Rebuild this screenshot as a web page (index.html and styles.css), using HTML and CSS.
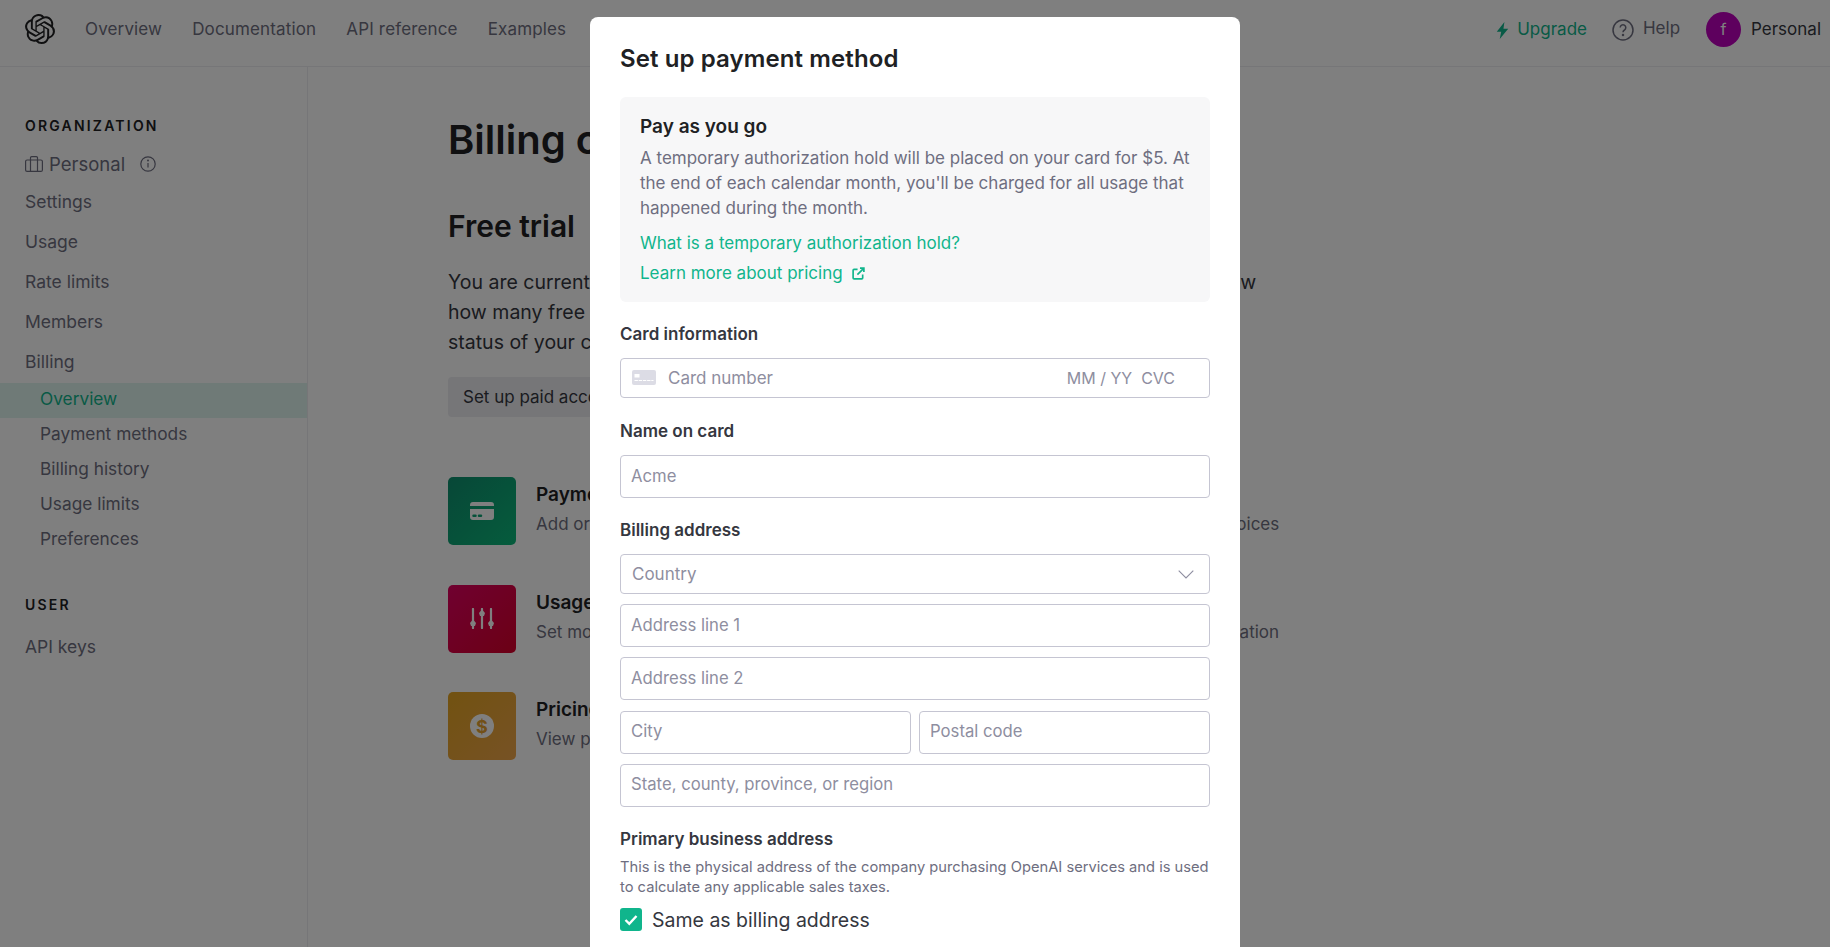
FILE: index.html
```html
<!DOCTYPE html>
<html>
<head>
  <meta charset="utf-8">
  <title>Billing overview</title>
  <link rel="stylesheet" href="styles.css">
</head>
<body>
<header class="topbar">
  <svg class="logo" viewBox="0 0 24 24" fill="#202123"><path d="M22.2819 9.8211a5.9847 5.9847 0 0 0-.5157-4.9108 6.0462 6.0462 0 0 0-6.5098-2.9A6.0651 6.0651 0 0 0 4.9807 4.1818a5.9847 5.9847 0 0 0-3.9977 2.9 6.0462 6.0462 0 0 0 .7427 7.0966 5.98 5.98 0 0 0 .511 4.9107 6.051 6.051 0 0 0 6.5146 2.9001A5.9847 5.9847 0 0 0 13.2599 24a6.0557 6.0557 0 0 0 5.7718-4.2058 5.9894 5.9894 0 0 0 3.9977-2.9001 6.0557 6.0557 0 0 0-.7475-7.0729zm-9.022 12.6081a4.4755 4.4755 0 0 1-2.8764-1.0408l.1419-.0804 4.7783-2.7582a.7948.7948 0 0 0 .3927-.6813v-6.7369l2.02 1.1686a.071.071 0 0 1 .038.052v5.5826a4.504 4.504 0 0 1-4.4945 4.4944zm-9.6607-4.1254a4.4708 4.4708 0 0 1-.5346-3.0137l.142.0852 4.783 2.7582a.7712.7712 0 0 0 .7806 0l5.8428-3.3685v2.3324a.0804.0804 0 0 1-.0332.0615L9.74 19.9502a4.4992 4.4992 0 0 1-6.1408-1.6464zM2.3408 7.8956a4.485 4.485 0 0 1 2.3655-1.9728V11.6a.7664.7664 0 0 0 .3879.6765l5.8144 3.3543-2.0201 1.1685a.0757.0757 0 0 1-.071 0l-4.8303-2.7865A4.504 4.504 0 0 1 2.3408 7.872zm16.5963 3.8558L13.1038 8.364 15.1192 7.2a.0757.0757 0 0 1 .071 0l4.8303 2.7913a4.4944 4.4944 0 0 1-.6765 8.1042v-5.6772a.79.79 0 0 0-.407-.667zm2.0107-3.0231l-.142-.0852-4.7735-2.7818a.7759.7759 0 0 0-.7854 0L9.409 9.2297V6.8974a.0662.0662 0 0 1 .0284-.0615l4.8303-2.7866a4.4992 4.4992 0 0 1 6.6802 4.66zM8.3065 12.863l-2.02-1.1638a.0804.0804 0 0 1-.038-.0567V6.0742a4.4992 4.4992 0 0 1 7.3757-3.4537l-.142.0805L8.704 5.459a.7948.7948 0 0 0-.3927.6813zm1.0976-2.3654l2.602-1.4998 2.6069 1.4998v2.9994l-2.5974 1.4997-2.6067-1.4997Z"/></svg>
  <nav class="topnav">
    <a>Overview</a>
    <a>Documentation</a>
    <a>API reference</a>
    <a>Examples</a>
  </nav>
  <div class="topright">
    <a class="upgrade">
      <svg class="bolt" viewBox="0 0 12 16" fill="currentColor"><path d="M7.8 0 .6 9.2h4.2L3.4 16l8-9.6H6.9z"/></svg>
      Upgrade
    </a>
    <a class="help">
      <svg class="help-icon" viewBox="0 0 22 22" fill="none" stroke="currentColor" stroke-width="1.5"><circle cx="11" cy="11" r="10"/><path d="M8.2 8.6a2.8 2.8 0 1 1 4.3 2.4c-1 .6-1.5 1.1-1.5 2.2"/><circle cx="11" cy="16" r=".5" fill="currentColor"/></svg>
      <span class="help-text">Help</span>
    </a>
    <span class="avatar">f</span>
    <span class="account">Personal</span>
  </div>
</header>

<div class="layout">
  <aside class="sidebar">
    <div class="side-title">ORGANIZATION</div>
    <div class="org">
      <svg class="org-icon" viewBox="0 0 18 16" fill="none" stroke="currentColor" stroke-width="1.2"><rect x=".6" y="4" width="16.8" height="11.4" rx="1.5"/><path d="M5.5 4V1.8A1.2 1.2 0 0 1 6.7.6h4.6a1.2 1.2 0 0 1 1.2 1.2V4M5.5 4v11.4M12.5 4v11.4"/></svg>
      <span>Personal</span>
      <svg class="info-icon" viewBox="0 0 16 16" fill="none" stroke="currentColor" stroke-width="1.2"><circle cx="8" cy="8" r="7.2"/><path d="M8 7v4.5"/><circle cx="8" cy="4.6" r=".4" fill="currentColor"/></svg>
    </div>
    <a class="side-link">Settings</a>
    <a class="side-link">Usage</a>
    <a class="side-link">Rate limits</a>
    <a class="side-link">Members</a>
    <a class="side-link billing">Billing</a>
    <a class="side-sub active">Overview</a>
    <a class="side-sub">Payment methods</a>
    <a class="side-sub">Billing history</a>
    <a class="side-sub">Usage limits</a>
    <a class="side-sub">Preferences</a>
    <div class="side-title user">USER</div>
    <a class="side-link">API keys</a>
  </aside>

  <main class="content">
    <h1>Billing overview</h1>
    <h2>Free trial</h2>
    <p class="lead">You are currently on a free trial, with the free credit you got on signing up. You can view<br>
      how many free tokens you have used on the usage page, and you can check the<br>
      status of your credit at any time.</p>
    <button class="plain-btn">Set up paid account</button>
    <div class="cards">
      <div class="card">
        <div class="tile green">
          <svg class="tile-icon" viewBox="0 0 24 18" fill="#fff"><path d="M0 3a3 3 0 0 1 3-3h18a3 3 0 0 1 3 3v1H0zM0 7h24v8a3 3 0 0 1-3 3H3a3 3 0 0 1-3-3zm3.5 5.5a1.2 1.2 0 0 0 0 2.5h2a1.2 1.2 0 0 0 0-2.5zm5.5 0a1.2 1.2 0 0 0 0 2.5h2a1.2 1.2 0 0 0 0-2.5z"/></svg>
        </div>
        <div><h3>Payment methods</h3><p>Add or change payment method</p></div>
      </div>
      <div class="card">
        <div class="tile blank"></div>
        <div><h3>Billing history</h3><p>View past and current invoices</p></div>
      </div>
      <div class="card">
        <div class="tile red">
          <svg class="tile-icon sliders" viewBox="0 0 24 21" fill="#fff"><path d="M3 1v19M12 1v19M21 1v19" stroke="#fff" stroke-width="2.2" stroke-linecap="round"/><path d="M3 11.5 6 15l-1 3H1l-1-3zM12 1.5 15 5l-1 3h-4L9 5zM21 11.5 24 15l-1 3h-4l-1-3z"/></svg>
        </div>
        <div><h3>Usage limits</h3><p>Set monthly spend limits</p></div>
      </div>
      <div class="card">
        <div class="tile blank"></div>
        <div><h3>Preferences</h3><p>Update your billing information</p></div>
      </div>
      <div class="card">
        <div class="tile orange"><span class="dollar">$</span></div>
        <div><h3>Pricing</h3><p>View pricing and FAQs</p></div>
      </div>
    </div>
  </main>
</div>

<div class="overlay">
  <section class="modal">
    <h2 class="modal-title">Set up payment method</h2>
    <div class="notice">
      <h4>Pay as you go</h4>
      <p>A temporary authorization hold will be placed on your card for $5. At the end of each calendar month, you'll be charged for all usage that happened during the month.</p>
      <a class="notice-link first">What is a temporary authorization hold?</a>
      <a class="notice-link">Learn more about pricing
        <svg class="ext-icon" viewBox="0 0 14 14" fill="none" stroke="currentColor" stroke-width="1.8"><path d="M6 2.5H2.2a1 1 0 0 0-1 1v8.3a1 1 0 0 0 1 1h8.3a1 1 0 0 0 1-1V8M5.8 8.2 12.6 1.4M8.6 1.2h4.2v4.2"/></svg>
      </a>
    </div>

    <label class="field-label card-label">Card information</label>
    <div class="field card-field">
      <svg class="card-icon" viewBox="0 0 24 15"><rect width="24" height="15" rx="2" fill="#dcdce5"/><rect x="2.5" y="4" width="5" height="3.5" fill="#fff"/><path d="M2.5 10.5h19" stroke="#fff" stroke-width="1.2" stroke-dasharray="3.4 .8"/></svg>
      <span class="ph number">Card number</span>
      <span class="ph expiry">MM / YY</span>
      <span class="ph cvc">CVC</span>
    </div>

    <label class="field-label name-label">Name on card</label>
    <div class="field tall"><span class="ph">Acme</span></div>

    <label class="field-label">Billing address</label>
    <div class="field country">
      <span class="ph">Country</span>
      <svg class="chevron" viewBox="0 0 16 9" fill="none" stroke="#8e8ea0" stroke-width="1.1"><path d="M.7.7 8 8l7.3-7.3"/></svg>
    </div>
    <div class="stack">
      <div class="field tall"><span class="ph">Address line 1</span></div>
      <div class="field tall"><span class="ph">Address line 2</span></div>
      <div class="two">
        <div class="field tall"><span class="ph">City</span></div>
        <div class="field tall"><span class="ph">Postal code</span></div>
      </div>
      <div class="field tall"><span class="ph">State, county, province, or region</span></div>
    </div>

    <label class="field-label">Primary business address</label>
    <p class="hint">This is the physical address of the company purchasing OpenAI services and is used to calculate any applicable sales taxes.</p>
    <div class="same">
      <span class="checkbox">
        <svg viewBox="0 0 14 12" fill="none" stroke="#fff" stroke-width="2.4"><path d="M1.5 6 5.3 9.8 12.5 2"/></svg>
      </span>
      Same as billing address
    </div>
  </section>
</div>
</body>
</html>
```

FILE: styles.css
```css
* {
  box-sizing: border-box;
}
html, body {
  height: 100%;
  margin: 0;
  overflow: hidden;
}
body {
  font-family: Inter, "Liberation Sans", sans-serif;
  color: #202123;
  background: #fff;
}
h1, h2, h3, h4, p {
  margin: 0;
}

/* top bar */
.topbar {
  display: flex;
  align-items: center;
  height: 67px;
  padding: 0 9px 8px 25px;
  border-bottom: 1px solid #ececf1;
}
.logo {
  width: 30px;
  height: 30px;
}
.topnav {
  display: flex;
  gap: 30px;
  margin-left: 30px;
  font-size: 17px;
  letter-spacing: .15px;
  color: #6e6e80;
}
.topright {
  display: flex;
  align-items: center;
  margin-left: auto;
  font-size: 17px;
}
.upgrade {
  display: flex;
  align-items: center;
  gap: 8px;
  color: #10b58c;
}
.bolt {
  width: 13px;
  height: 17px;
  margin-top: 2px;
}
.help {
  display: flex;
  align-items: center;
  gap: 9px;
  margin-left: 25px;
  color: #6e6e80;
}
.help-icon {
  width: 22px;
  height: 22px;
  margin-top: 2px;
}
.help-text {
  margin-bottom: 2px;
}
.avatar {
  display: flex;
  align-items: center;
  justify-content: center;
  width: 35px;
  height: 35px;
  margin-left: 26px;
  border-radius: 50%;
  background: #bc00bc;
  color: #fff;
  font-size: 16px;
}
.account {
  margin-left: 10px;
  color: #353740;
}

/* sidebar */
.layout {
  display: flex;
  height: 880px;
}
.sidebar {
  flex: none;
  width: 308px;
  padding-top: 49px;
  border-right: 1px solid #ececf1;
  color: #6e6e80;
}
.side-title {
  padding-left: 25px;
  font-size: 14px;
  line-height: 20px;
  font-weight: 600;
  letter-spacing: 2.2px;
  color: #202123;
}
.side-title.user {
  margin-top: 37px;
  margin-bottom: 12px;
}
.org {
  display: flex;
  align-items: center;
  height: 24px;
  margin: 16px 0 6px;
  padding-left: 25px;
  font-size: 18.5px;
}
.org-icon {
  width: 18px;
  height: 16px;
  margin-right: 6px;
}
.info-icon {
  width: 16px;
  height: 16px;
  margin-left: 15px;
}
.side-link {
  display: block;
  height: 40px;
  padding-left: 25px;
  font-size: 17.5px;
  line-height: 40px;
}
.side-link.billing {
  height: 41px;
}
.side-sub {
  display: block;
  height: 35px;
  padding-left: 40px;
  font-size: 17.3px;
  line-height: 31px;
}
.side-sub.active {
  background: #dff5ee;
  color: #10b58c;
}

/* main column */
.content {
  flex: 1;
  padding: 49px 0 0 140px;
}
h1 {
  font-size: 40px;
  line-height: 48px;
  font-weight: 600;
}
.content h2 {
  margin-top: 44px;
  font-size: 30px;
  line-height: 36px;
  font-weight: 600;
}
.lead {
  margin-top: 23px;
  font-size: 19.5px;
  line-height: 30px;
  color: #353740;
  white-space: nowrap;
}
.plain-btn {
  display: block;
  height: 40px;
  margin-top: 20px;
  padding: 0 15px;
  border: 0;
  border-radius: 4px;
  background: #ececf1;
  color: #353740;
  font: inherit;
  font-size: 17px;
}
.cards {
  display: grid;
  grid-template-columns: 496px 1fr;
  row-gap: 39.5px;
  margin-top: 60px;
}
.card {
  display: flex;
  gap: 20px;
}
.card h3 {
  margin-top: 7px;
  font-size: 19px;
  line-height: 22px;
  font-weight: 600;
}
.card p {
  margin-top: 7px;
  font-size: 17px;
  line-height: 22px;
  color: #6e6e80;
  white-space: nowrap;
}
.tile {
  display: flex;
  align-items: center;
  justify-content: center;
  flex: none;
  width: 68px;
  height: 68px;
  border-radius: 5px;
}
.tile.green {
  background: linear-gradient(135deg, #0f8f6f, #0bb87a);
}
.tile.red {
  background: linear-gradient(135deg, #e00060, #d8002a);
}
.tile.orange {
  background: linear-gradient(135deg, #e4a422, #eea54a);
}
.tile.blank {
  visibility: hidden;
}
.tile-icon {
  width: 24px;
  height: 18px;
}
.tile-icon.sliders {
  height: 21px;
}
.dollar {
  display: flex;
  align-items: center;
  justify-content: center;
  width: 24px;
  height: 24px;
  border-radius: 50%;
  background: #fff;
  color: #e4a030;
  font-size: 18px;
  font-weight: 700;
}

/* modal */
.overlay {
  position: fixed;
  inset: 0;
  display: flex;
  justify-content: center;
  padding-top: 17px;
  background: rgba(0, 0, 0, .5);
}
.modal {
  flex: none;
  width: 650px;
  height: 1100px;
  padding: 26px 30px;
  border-radius: 8px;
  background: #fff;
}
.modal-title {
  font-size: 24px;
  line-height: 32px;
  font-weight: 600;
  letter-spacing: .1px;
}
.notice {
  margin-top: 22px;
  padding: 18px 20px 17px;
  border-radius: 6px;
  background: #f7f7f8;
}
.notice h4 {
  font-size: 19px;
  line-height: 24px;
  font-weight: 600;
}
.notice p {
  margin-top: 7px;
  font-size: 17px;
  line-height: 25px;
  color: #6e6e80;
}
.notice-link {
  display: flex;
  align-items: center;
  margin-top: 6px;
  font-size: 17px;
  line-height: 24px;
  color: #10b58c;
}
.notice-link.first {
  margin-top: 10px;
}
.ext-icon {
  width: 13px;
  height: 13px;
  margin-left: 9px;
}
.field-label {
  display: block;
  margin: 21px 0 13px;
  font-size: 17px;
  line-height: 22px;
  font-weight: 600;
  color: #353740;
}
.field-label.name-label {
  margin-top: 22px;
}
.field {
  display: flex;
  align-items: center;
  height: 40px;
  padding-left: 11px;
  border: 1px solid #c5c5d2;
  border-radius: 4px;
  font-size: 17px;
}
.field.tall {
  height: 43px;
  padding-left: 10px;
  padding-bottom: 2px;
  font-size: 16.7px;
}
.field.card-field {
  padding-bottom: 1px;
}
.ph {
  color: #8e8ea0;
}
.card-icon {
  width: 24px;
  height: 15px;
}
.ph.number {
  margin-left: 12px;
}
.ph.expiry {
  margin-left: auto;
  font-size: 16px;
}
.ph.cvc {
  margin: 0 34px 0 9px;
  font-size: 16px;
}
.country {
  justify-content: space-between;
  padding-right: 15px;
}
.chevron {
  width: 16px;
  height: 9px;
}
.stack {
  display: flex;
  flex-direction: column;
  gap: 10.25px;
  margin-top: 10px;
}
.two {
  display: grid;
  grid-template-columns: 291px 291px;
  justify-content: space-between;
}
.hint {
  margin-top: -6px;
  font-size: 14.7px;
  line-height: 20px;
  color: #6e6e80;
}
.same {
  display: flex;
  align-items: center;
  gap: 10px;
  margin-top: 11px;
  font-size: 19.5px;
  color: #353740;
}
.checkbox {
  display: flex;
  align-items: center;
  justify-content: center;
  width: 22px;
  height: 23px;
  border-radius: 3px;
  background: #10b58c;
}
.checkbox svg {
  width: 14px;
  height: 12px;
}
```
